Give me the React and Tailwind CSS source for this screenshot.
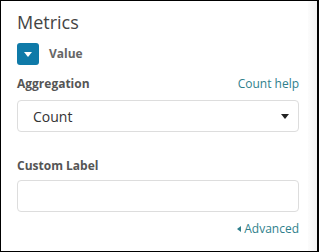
import React from "react";

const App = () => {
  return (
    <div
      className="w-[319px] h-[252px] flex border-l border-t border-b border-r-2 border-black bg-white text-[#444]"
      style={{ fontFamily: '"Open Sans", "Liberation Sans", sans-serif' }}
    >
      {/* Panel */}
      <div className="flex-1 pl-4 pr-[9px] pt-[9px]">
        <h2 className="text-[18px] leading-[24px] text-[#444]">Metrics</h2>

        <div className="mt-[9px] flex items-center gap-[10px]">
          <button className="w-[22px] h-[22px] rounded-[3px] bg-[#0f7aa8] flex items-center justify-center">
            <svg width="8" height="5" viewBox="0 0 8 5">
              <path d="M0 0h8L4 5z" fill="#fff" />
            </svg>
          </button>
          <span className="text-[12px] font-bold text-[#666]">Value</span>
        </div>

        <div className="mt-[10px] flex items-center justify-between">
          <span className="text-[12px] font-bold text-[#555]">Aggregation</span>
          <span className="text-[12px] text-[#2f7f8c]">Count help</span>
        </div>

        <div className="mt-[7px] h-[32px] rounded-[4px] border border-[#ddd] flex items-center justify-between pl-[15px] pr-[9px]">
          <span className="text-[14px] text-[#333]">Count</span>
          <svg width="8" height="5" viewBox="0 0 8 5">
            <path d="M0 0h8L4 5z" fill="#222" />
          </svg>
        </div>

        <div className="mt-[25px] text-[12px] font-bold text-[#555]">Custom Label</div>

        <div className="mt-[5px] h-[32px] rounded-[4px] border border-[#ddd]" />

        <div className="mt-[8px] flex items-center justify-end gap-[3px] text-[12px] text-[#2f7f8c]">
          <svg width="4" height="6" viewBox="0 0 4 6">
            <path d="M4 0v6L0 3z" fill="#2f7f8c" />
          </svg>
          <span>Advanced</span>
        </div>
      </div>

      {/* Scroll gutter */}
      <div className="w-[9px] bg-gradient-to-r from-[#fcfcfc] to-[#f2f2f2]" />
    </div>
  );
};

export default App;
